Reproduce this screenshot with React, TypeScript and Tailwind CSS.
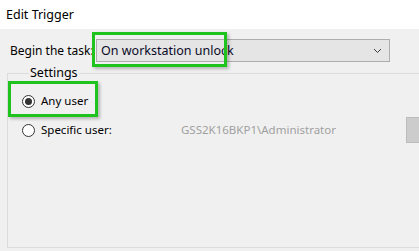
export default function App() {
  const font = { fontFamily: '"Noto Sans", "Open Sans", sans-serif' };
  return (
    <div
      className="w-[419px] h-[251px] overflow-hidden bg-[#f0f0f0] text-[12px] text-[#000] relative"
      style={font}
    >
      {/* title bar */}
      <div className="h-[29px] bg-white px-[6px] pt-[7px] leading-[16px] text-[12.5px]">
        Edit Trigger
      </div>

      {/* begin the task row */}
      <div className="flex items-center pt-[10px] pl-[10px]">
        <span className="w-[86px] leading-[16px]">Begin the task:</span>
        <div className="relative w-[294px] h-[23px] border border-[#adadad] bg-[#e5e5e5] flex items-center pl-[4px] pr-[6px]">
          <span className="flex-1 text-[12.5px] text-[#0a0a28] leading-[16px]">
            On workstation unlock
          </span>
          <svg width="9" height="6" viewBox="0 0 9 6" className="mt-[1px] mr-[1px]">
            <path d="M1 1 L4.5 4.5 L8 1" fill="none" stroke="#404040" strokeWidth="1" />
          </svg>
          <div className="absolute left-[-5px] top-[-8px] w-[135px] h-[35px] border-[3px] border-[#1ec31e] shadow-[2px_2px_3px_rgba(0,0,0,0.25)]" />
        </div>
      </div>

      {/* settings group */}
      <fieldset className="ml-[7px] mt-[3px] w-[430px] h-[183px] border border-[#dcdcdc] pl-[14px]">
        <legend className="ml-[7px] px-[1px] leading-[16px] text-[12.5px]">Settings</legend>

        <div className="flex flex-col">
          <div className="relative flex items-center h-[16px] mt-[12px]">
            <span className="w-[13px] h-[13px] rounded-full border border-[#333] bg-white flex items-center justify-center">
              <span className="w-[7px] h-[7px] rounded-full bg-[#333]" />
            </span>
            <span className="ml-[6px] text-[11.5px] leading-[16px]">Any user</span>
            <div className="absolute left-[-14px] top-[-12px] w-[90px] h-[36px] border-[3px] border-[#1ec31e] shadow-[2px_2px_3px_rgba(0,0,0,0.25)]" />
          </div>

          <div className="flex items-center h-[26px] mt-[8px]">
            <span className="w-[13px] h-[13px] rounded-full border border-[#333] bg-white" />
            <span className="ml-[6px] w-[140px] text-[11.5px] leading-[16px]">Specific user:</span>
            <span className="w-[225px] text-[11.5px] leading-[16px] text-[#a0a0a0]">
              GSS2K16BKP1\Administrator
            </span>
            <div className="w-[30px] h-[26px] border border-[#bcbcbc] bg-[#cccccc]" />
          </div>
        </div>
      </fieldset>
    </div>
  );
}
